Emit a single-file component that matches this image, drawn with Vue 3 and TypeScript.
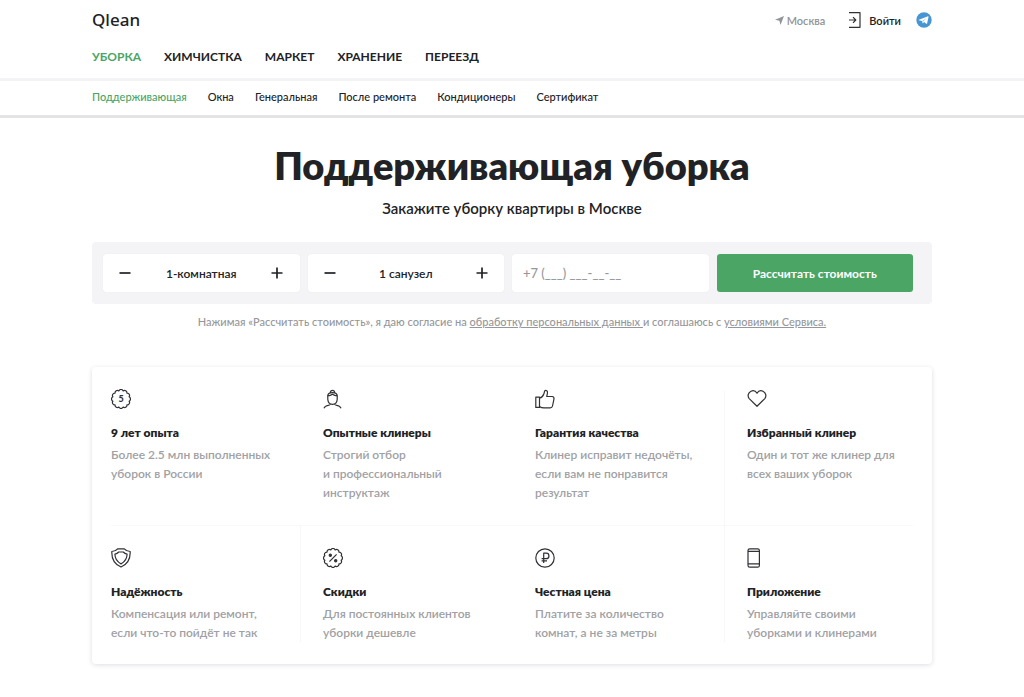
<script setup lang="ts">
import { ref } from 'vue'

interface Feature {
  icon: string
  title: string
  lines: string[]
}

const sections = ['Уборка', 'Химчистка', 'Маркет', 'Хранение', 'Переезд']
const services = ['Поддерживающая', 'Окна', 'Генеральная', 'После ремонта', 'Кондиционеры', 'Сертификат']

const features: Feature[] = [
  { icon: 'years', title: '9 лет опыта', lines: ['Более 2.5 млн выполненных', 'уборок в России'] },
  { icon: 'cleaner', title: 'Опытные клинеры', lines: ['Строгий отбор', 'и профессиональный', 'инструктаж'] },
  { icon: 'thumb', title: 'Гарантия качества', lines: ['Клинер исправит недочёты,', 'если вам не понравится', 'результат'] },
  { icon: 'heart', title: 'Избранный клинер', lines: ['Один и тот же клинер для', 'всех ваших уборок'] },
  { icon: 'shield', title: 'Надёжность', lines: ['Компенсация или ремонт,', 'если что-то пойдёт не так'] },
  { icon: 'percent', title: 'Скидки', lines: ['Для постоянных клиентов', 'уборки дешевле'] },
  { icon: 'rouble', title: 'Честная цена', lines: ['Платите за количество', 'комнат, а не за метры'] },
  { icon: 'phone', title: 'Приложение', lines: ['Управляйте своими', 'уборками и клинерами'] },
]

const rooms = ref(1)
const baths = ref(1)
const phone = ref('')

const step = (value: number, by: number) => Math.max(1, value + by)

// Scalloped outline of the badge icons: twelve small arcs around a circle.
const scallops = (() => {
  const count = 12
  const points = Array.from({ length: count }, (_, i) => {
    const angle = ((i + 0.5) / count) * Math.PI * 2
    return `${(10 + 8.4 * Math.cos(angle)).toFixed(2)} ${(10 + 8.4 * Math.sin(angle)).toFixed(2)}`
  })
  return `M${points[0]}` + [...points.slice(1), points[0]].map((p) => `A2.4 2.4 0 0 1 ${p}`).join('') + 'Z'
})()
</script>

<template>
  <div class="page">
    <header>
      <div class="wrap top">
        <a class="logo" href="#">Qlean</a>
        <div class="tools">
          <button class="city" type="button">
            <svg width="9" height="9" viewBox="0 0 8 8" aria-hidden="true"><path d="M8 0 4.9 8 3.9 4.3 0 3.4Z" fill="#929496" /></svg>
            Москва
          </button>
          <a class="login" href="#">
            <svg width="13" height="16" viewBox="0 0 13 16" aria-hidden="true" class="line">
              <path d="M1 .7H12V15.3H1M1 8H7.6M5 5.2 7.8 8 5 10.8" />
            </svg>
            Войти
          </a>
          <a class="telegram" href="#" aria-label="Telegram">
            <svg width="16" height="16" viewBox="0 0 16 16" aria-hidden="true">
              <circle cx="8" cy="8" r="7.7" fill="#4796d2" />
              <path d="M2.9 7.8 12 4.2Q12.7 4 12.5 4.9L11.1 11.4Q10.9 12.1 10.2 11.7L8.1 10.1 7 11.2Q6.6 11.5 6.5 10.9L6 9 3 8.2Q2.5 8 2.9 7.8Z" fill="#fff" />
              <path d="M6.3 9.1 10.6 5.9 7.2 9.4 6.9 10.8Z" fill="#8fc1e6" />
            </svg>
          </a>
        </div>
      </div>
      <nav class="wrap sections" aria-label="Разделы">
        <a v-for="(name, i) in sections" :key="name" href="#" :class="{ active: i === 0 }">{{ name }}</a>
      </nav>
    </header>

    <div class="subheader">
      <nav class="wrap services" aria-label="Услуги">
        <a v-for="(name, i) in services" :key="name" href="#" :class="{ active: i === 0 }">{{ name }}</a>
      </nav>
    </div>

    <main class="wrap">
      <h1>Поддерживающая уборка</h1>
      <p class="lead">Закажите уборку квартиры в Москве</p>

      <form class="order" @submit.prevent>
        <div class="field stepper">
          <button type="button" aria-label="Меньше комнат" @click="rooms = step(rooms, -1)">
            <svg width="12" height="12" viewBox="0 0 12 12"><path d="M.5 6H11.5" /></svg>
          </button>
          <output>{{ rooms }}-комнатная</output>
          <button type="button" aria-label="Больше комнат" @click="rooms = step(rooms, 1)">
            <svg width="12" height="12" viewBox="0 0 12 12"><path d="M.5 6H11.5M6 .5V11.5" /></svg>
          </button>
        </div>
        <div class="field stepper">
          <button type="button" aria-label="Меньше санузлов" @click="baths = step(baths, -1)">
            <svg width="12" height="12" viewBox="0 0 12 12"><path d="M.5 6H11.5" /></svg>
          </button>
          <output>{{ baths }} санузел</output>
          <button type="button" aria-label="Больше санузлов" @click="baths = step(baths, 1)">
            <svg width="12" height="12" viewBox="0 0 12 12"><path d="M.5 6H11.5M6 .5V11.5" /></svg>
          </button>
        </div>
        <input v-model="phone" class="field phone" type="tel" aria-label="Телефон" placeholder="+7 (___) ___-__-__" />
        <button class="submit" type="submit">Рассчитать стоимость</button>
      </form>

      <p class="legal">
        Нажимая «Рассчитать стоимость», я даю согласие на <a href="#">обработку персональных данных </a>и соглашаюсь с
        <a href="#">условиями Сервиса.</a>
      </p>

      <ul class="features">
        <li v-for="f in features" :key="f.title">
          <svg class="icon line" width="20" height="20" viewBox="0 0 20 20" aria-hidden="true">
            <template v-if="f.icon === 'years'">
              <path :d="scallops" />
              <text x="10" y="13.4" text-anchor="middle" class="digit">5</text>
            </template>
            <template v-else-if="f.icon === 'cleaner'">
              <path d="M7.3 3.6A2.2 2.2 0 1 1 11.7 3.6M4.6 7.5Q4.7 3.6 9.5 3.6 14.3 3.6 14.4 7.5M4.6 7Q7.6 6.9 9.5 5.3 11.4 6.9 14.4 7M4.8 6.8V10.5Q5.2 15.2 9.5 15.4 13.8 15.2 14.2 10.5V6.8M7.3 14.7Q7.2 16 5.2 16.3 1.8 16.8 1 19.3M11.7 14.7Q11.8 16 13.8 16.3 17.2 16.8 18 19.3" />
            </template>
            <template v-else-if="f.icon === 'thumb'">
              <path d="M.8 8.2H4.5V18.4H.8ZM4.5 9.2Q7.7 8.4 9 4.5L9.6 2.2Q10.4 1 11.8 1.8 12.8 2.6 12.4 4.5L11.7 7.5H17.2Q19.2 7.8 19 9.8L17.5 17Q17.1 18.8 15.2 18.9H9Q6.5 18.8 4.5 17.4" />
            </template>
            <template v-else-if="f.icon === 'heart'">
              <path d="M10 4.3C8.5 1.8 5.9 1.4 4 2.3 1.2 3.7.2 7 2.2 9.6L10 17.3 17.8 9.6C19.8 7 18.8 3.7 16 2.3 14.1 1.4 11.5 1.8 10 4.3Z" />
            </template>
            <template v-else-if="f.icon === 'shield'">
              <path d="M10 .9H13.4Q15.3 3.4 19.2 3.5 19.6 14.8 10 19 .4 14.8.8 3.5 4.7 3.4 6.6.9Z" />
              <path d="M10 4H12.3Q13.7 5.7 16.1 6.1 16 12.8 10 15.9 4 12.8 3.9 6.1 6.3 5.7 7.7 4Z" />
            </template>
            <template v-else-if="f.icon === 'percent'">
              <path :d="scallops" />
              <path d="M6.4 13.6 13.6 6.4" />
              <circle cx="7.3" cy="7.3" r="1.1" class="dot" />
              <circle cx="12.7" cy="12.7" r="1.1" class="dot" />
            </template>
            <template v-else-if="f.icon === 'rouble'">
              <circle cx="10" cy="10" r="9.2" />
              <path d="M8.7 15V5.2H11.2A2.7 2.7 0 0 1 11.2 10.7H6.6M6.6 12.9H12" />
            </template>
            <template v-else>
              <rect x="1" y=".8" width="11.4" height="18.4" rx="1.8" />
              <path d="M1 3.4H12.4M1 15.8H12.4" />
            </template>
          </svg>
          <h2>{{ f.title }}</h2>
          <p><template v-for="(line, i) in f.lines" :key="line"><br v-if="i > 0" />{{ line }}</template></p>
        </li>
      </ul>
    </main>
  </div>
</template>

<style>
body {
  margin: 0;
  background: #fff;
}
</style>

<style scoped>
.page {
  padding-bottom: 32px;
  font-family: Lato, "Open Sans", sans-serif;
  color: #212225;
}

.page * {
  box-sizing: border-box;
}

.wrap {
  width: calc(100% - 32px);
  max-width: 840px;
  margin: 0 auto;
}

a {
  color: inherit;
  text-decoration: none;
}

button,
input {
  font: inherit;
  color: inherit;
  border: 0;
  background: none;
  padding: 0;
}

button {
  cursor: pointer;
}

.line {
  fill: none;
  stroke: #303134;
  stroke-width: 1.2;
  stroke-linejoin: round;
}

header {
  border-bottom: 3px solid #f3f3f6;
}

.top {
  display: flex;
  justify-content: space-between;
  align-items: center;
  height: 40px;
}

.logo {
  font: 500 17px/24px "Noto Sans", sans-serif;
}

.tools {
  display: flex;
  align-items: center;
  font-size: 11px;
  font-weight: 600;
}

.city {
  display: flex;
  align-items: center;
  gap: 3px;
  color: #929496;
}

.login {
  display: flex;
  align-items: center;
  gap: 8px;
  margin: 0 15px 0 23px;
}

.telegram {
  display: flex;
}

.sections {
  display: flex;
  gap: 23px;
  padding: 8px 0 12px;
  font-size: 12px;
  line-height: 18px;
  font-weight: 700;
  text-transform: uppercase;
}

.services {
  display: flex;
  gap: 21px;
  padding: 8px 0 10px;
  font-size: 11px;
  line-height: 16px;
  font-weight: 500;
}

.active {
  color: #4ba564;
}

.subheader {
  border-bottom: 3px solid #e4e4e7;
}

h1 {
  margin: 23px 0 0;
  font-size: 38px;
  line-height: 48px;
  font-weight: 800;
  text-align: center;
}

.lead {
  margin: 9px 0 0;
  font-size: 15px;
  line-height: 20px;
  font-weight: 600;
  text-align: center;
}

.order {
  display: grid;
  grid-template-columns: repeat(4, 1fr);
  gap: 8px;
  margin-top: 24px;
  padding: 12px 19px 12px 11px;
  border-radius: 4px;
  background: #f4f4f6;
  font-size: 12px;
  font-weight: 600;
}

.field {
  min-width: 0;
  height: 38px;
  border-radius: 3px;
  background: #fff;
  box-shadow: 0 0 1px #dcdce2;
}

.stepper {
  display: flex;
  align-items: center;
  justify-content: space-between;
  padding: 0 6px;
}

.stepper button {
  display: flex;
  align-items: center;
  justify-content: center;
  width: 32px;
  height: 32px;
}

.stepper path {
  stroke: #212225;
  stroke-width: 1.7;
}

.phone {
  padding: 0 11px;
  font-size: 13px;
  font-weight: 500;
}

.phone::placeholder {
  color: #96979a;
  opacity: 1;
}

.submit {
  border-radius: 3px;
  background: #4ba564;
  color: #fff;
  font-weight: 700;
}

.legal {
  margin: 10px 0 0;
  font-size: 11px;
  line-height: 16px;
  font-weight: 500;
  color: #96979a;
  text-align: center;
}

.legal a {
  text-decoration: underline;
}

.features {
  display: grid;
  grid-template-columns: repeat(4, 1fr);
  column-gap: 46px;
  margin: 37px 0 0;
  padding: 0 19px;
  list-style: none;
  border-radius: 4px;
  box-shadow: 0 1px 5px #dedee4;
}

li {
  position: relative;
  padding: 22px 0;
}

li:nth-child(-n + 4) {
  padding-bottom: 24px;
}

li:nth-child(4n)::before,
li:nth-child(6)::before {
  content: "";
  position: absolute;
  top: 0;
  bottom: 22px;
  left: -23px;
  border-left: 1px solid #f7f7fa;
}

li:nth-child(4)::before {
  top: 24px;
  bottom: 0;
}

li:nth-child(-n + 4)::after {
  content: "";
  position: absolute;
  bottom: 0;
  left: 0;
  right: -46px;
  border-bottom: 1px solid #f9f9fb;
}

li:nth-child(4)::after {
  right: 0;
}

.icon {
  display: block;
}

.digit {
  font: 900 9px Lato, sans-serif;
  fill: #303134;
  stroke: none;
}

.dot {
  fill: #303134;
}

h2 {
  margin: 14px 0 2px;
  font-size: 12px;
  line-height: 20px;
  font-weight: 800;
}

li p {
  margin: 0;
  min-height: 38px;
  font-size: 12px;
  line-height: 19px;
  font-weight: 600;
  color: #a0a1a4;
  white-space: nowrap;
}
</style>
